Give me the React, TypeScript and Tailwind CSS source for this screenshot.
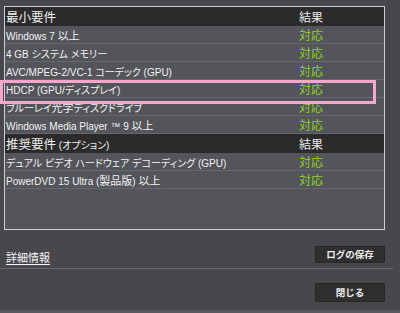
import React from "react";

const latinStack = '"Liberation Sans", "Noto Sans CJK JP", sans-serif';

type Row = { label: string; header?: boolean; result: string };

const rows: Row[] = [
  { label: "最小要件", header: true, result: "結果" },
  { label: "Windows 7 以上", result: "対応" },
  { label: "4 GB システム メモリー", result: "対応" },
  { label: "AVC/MPEG-2/VC-1 コーデック (GPU)", result: "対応" },
  { label: "HDCP (GPU/ディスプレイ)", result: "対応" },
  { label: "ブルーレイ光学ディスクドライブ", result: "対応" },
  { label: "Windows Media Player ™ 9 以上", result: "対応" },
  { label: "推奨要件 (オプション)", header: true, result: "結果" },
  { label: "デュアル ビデオ ハードウェア デコーディング (GPU)", result: "対応" },
  { label: "PowerDVD 15 Ultra (製品版) 以上", result: "対応" },
];

type Kind = "latin" | "kana" | "kanji";

function kindOf(ch: string): Kind {
  const c = ch.charCodeAt(0);
  if (c >= 0x3040 && c <= 0x30ff) return "kana";
  if ((c >= 0x4e00 && c <= 0x9fff) || (c >= 0x3000 && c < 0x3040)) return "kanji";
  return "latin";
}

function split(text: string) {
  const parts: { k: Kind; t: string }[] = [];
  for (const ch of Array.from(text)) {
    const k = kindOf(ch);
    const last = parts[parts.length - 1];
    if (last && last.k === k) last.t += ch;
    else parts.push({ k, t: ch });
  }
  return parts;
}

function Label({ text, header }: { text: string; header?: boolean }) {
  return (
    <>
      {split(text).map((p, i) => {
        if (p.k === "kanji")
          return (
            <span
              key={i}
              className={
                header
                  ? "text-[12.5px] [font-family:'Noto_Sans_CJK_JP',sans-serif]"
                  : "text-[11px] [font-family:'Noto_Sans_CJK_JP',sans-serif]"
              }
            >
              {p.t}
            </span>
          );
        if (p.k === "kana")
          return (
            <span
              key={i}
              className="text-[10px] [font-family:'Noto_Sans_CJK_JP',sans-serif] [font-feature-settings:'palt']"
            >
              {p.t}
            </span>
          );
        return (
          <span key={i} className="text-[10px]">
            {p.t}
          </span>
        );
      })}
    </>
  );
}

export default function App() {
  return (
    <div
      className="relative w-[400px] h-[313px] bg-[#48474c] overflow-hidden text-white"
      style={{ fontFamily: latinStack }}
    >
      <div className="pt-[6px] pl-[4px]">
        <div className="w-[381px] h-[224px] border border-[#cfcfcf] bg-[#54555a] flex flex-col">
          {rows.map((r, i) =>
            r.header ? (
              <div
                key={i}
                className="flex items-center h-[19px] bg-[#2b2b2b] shrink-0"
              >
                <div className="w-[294px] pl-[1px] leading-none text-[#f0f0f0] whitespace-nowrap">
                  <Label text={r.label} header />
                </div>
                <div className="text-[12px] leading-none text-[#e8e8e8] [font-family:'Noto_Sans_CJK_JP',sans-serif]">
                  {r.result}
                </div>
              </div>
            ) : (
              <div
                key={i}
                className="flex items-center h-[18px] border-b border-[#67686d] shrink-0"
              >
                <div className="w-[294px] pl-[1px] leading-none text-[#f2f2f2] whitespace-nowrap">
                  <Label text={r.label} />
                </div>
                <div className="text-[12px] leading-none text-[#8fd22a] [font-family:'Noto_Sans_CJK_JP',sans-serif]">
                  {r.result}
                </div>
              </div>
            )
          )}
        </div>
      </div>

      <div className="flex items-center justify-between pl-[6px] pr-[15px] mt-[16px]">
        <span className="text-[11px] leading-none underline underline-offset-2 text-[#f4f4f4] mt-[6px] [font-family:'Noto_Sans_CJK_JP',sans-serif]">
          詳細情報
        </span>
        <button className="w-[70px] h-[17px] bg-[#2f2f30] border border-[#262626] rounded-[1px] text-[9.5px] font-bold leading-none text-[#eeeeee] [font-family:'Noto_Sans_CJK_JP',sans-serif]">
          ログの保存
        </button>
      </div>

      <div className="mt-[5px] w-[393px] h-px bg-[#67676b]" />

      <div className="flex justify-end pr-[15px] mt-[14px]">
        <button className="w-[70px] h-[19px] bg-[#2f2f30] border border-[#262626] rounded-[1px] text-[9.5px] font-bold leading-none text-[#eeeeee] [font-family:'Noto_Sans_CJK_JP',sans-serif]">
          閉じる
        </button>
      </div>

      <div className="absolute left-0 bottom-0 w-full h-[3px] bg-[#5a5a5e]" />

      <div className="absolute left-0 top-[80px] w-[376px] h-[24px] border-[3px] border-[#f3a8cb]" />
    </div>
  );
}
